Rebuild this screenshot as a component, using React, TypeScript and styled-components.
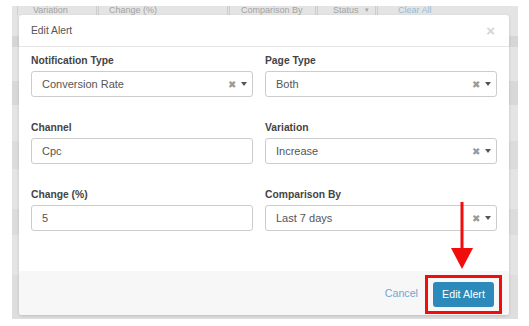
import React from "react";
import styled, { createGlobalStyle } from "styled-components";

const GlobalStyle = createGlobalStyle`
  html, body {
    margin: 0;
    padding: 0;
    background: #ffffff;
    font-family: "Liberation Sans", Arial, sans-serif;
  }
`;

const fields = [
  { label: "Notification Type", value: "Conversion Rate", select: true },
  { label: "Page Type", value: "Both", select: true },
  { label: "Channel", value: "Cpc", select: false },
  { label: "Variation", value: "Increase", select: true },
  { label: "Change (%)", value: "5", select: false },
  { label: "Comparison By", value: "Last 7 days", select: true },
];

const bgColumns = [
  { title: "Variation", width: 81, pad: 15 },
  { title: "Change (%)", width: 131, pad: 10 },
  { title: "Comparison By", width: 88, pad: 11 },
  { title: "Status", width: 60, pad: 15, caret: true },
];

const bgRows = [
  { h: 21, shade: "#e4e4e4" },
  { h: 11, shade: "#d6d6d6" },
  { h: 34, shade: "#e4e4e4" },
  { h: 24, shade: "#d8d8d8" },
  { h: 36, shade: "#e4e4e4" },
  { h: 28, shade: "#dcdcdc" },
  { h: 40, shade: "#e4e4e4" },
  { h: 26, shade: "#dcdcdc" },
  { h: 40, shade: "#e4e4e4" },
  { h: 60, shade: "#dedede" },
];

export default function App() {
  return (
    <>
      <GlobalStyle />
      <Page>
        <Backdrop>
          <BgHeader>
            <BgEdge />
            {bgColumns.map((col) => (
              <BgCell key={col.title} $width={col.width} $pad={col.pad}>
                {col.title}
                {col.caret && <BgCaret>▾</BgCaret>}
              </BgCell>
            ))}
            <BgLink>Clear All</BgLink>
          </BgHeader>
          {bgRows.map((row, i) => (
            <BgRow key={i} $h={row.h} $shade={row.shade} />
          ))}

          <Modal>
            <ModalHeader>
              <Title>Edit Alert</Title>
              <Close>×</Close>
            </ModalHeader>
            <ModalBody>
              {fields.map((f) => (
                <Field key={f.label}>
                  <Label>{f.label}</Label>
                  <Control>
                    <Value>{f.value}</Value>
                    {f.select && (
                      <Addons>
                        <ClearIcon>✖</ClearIcon>
                        <CaretIcon />
                      </Addons>
                    )}
                  </Control>
                </Field>
              ))}
            </ModalBody>
            <ModalFooter>
              <CancelLink>Cancel</CancelLink>
              <Highlight>
                <PrimaryButton>Edit Alert</PrimaryButton>
              </Highlight>
            </ModalFooter>
            <Arrow width="22" height="68" viewBox="0 0 22 68">
              <rect x="9.5" y="0" width="3" height="48" fill="#f20d0d" />
              <polygon points="0,46 22,46 11,67" fill="#f20d0d" />
            </Arrow>
          </Modal>
        </Backdrop>
      </Page>
    </>
  );
}

const Page = styled.div`
  width: 529px;
  height: 326px;
  padding: 6px 11px 7px 12px;
  box-sizing: border-box;
`;

const Backdrop = styled.div`
  position: relative;
  height: 313px;
  background: #e4e4e4;
  overflow: hidden;
`;

const BgHeader = styled.div`
  display: flex;
  align-items: center;
  height: 10px;
  margin-top: -1px;
  font-size: 9px;
  color: #a3a3a3;
  line-height: 10px;
`;

const BgEdge = styled.div`
  width: 5px;
  align-self: stretch;
  border-right: 1px solid #cfcfcf;
`;

const BgCell = styled.div<{ $width: number; $pad: number }>`
  display: flex;
  align-items: center;
  width: ${({ $width }) => $width}px;
  padding-left: ${({ $pad }) => $pad}px;
  box-sizing: border-box;
  align-self: stretch;
  border-right: 3px double #cccccc;
  white-space: nowrap;
`;

const BgCaret = styled.span`
  margin-left: auto;
  margin-right: 6px;
  font-size: 7px;
`;

const BgLink = styled.div`
  padding-left: 20px;
  color: #94bcd9;
`;

const BgRow = styled.div<{ $h: number; $shade: string }>`
  height: ${({ $h }) => $h}px;
  background: ${({ $shade }) => $shade};
`;

const Modal = styled.div`
  position: absolute;
  left: 7px;
  top: 9px;
  width: 490px;
  height: 300px;
  background: #ffffff;
  border-radius: 3px;
  box-shadow: 0 1px 3px rgba(0, 0, 0, 0.15);
  display: flex;
  flex-direction: column;
  overflow: visible;
`;

const ModalHeader = styled.div`
  height: 31px;
  padding: 0 14px 0 12px;
  border-bottom: 1px solid #e6e6e6;
  display: flex;
  align-items: center;
  justify-content: space-between;
`;

const Title = styled.span`
  font-size: 10.3px;
  color: #555555;
`;

const Close = styled.span`
  font-size: 15px;
  font-weight: bold;
  color: #d4d4d4;
`;

const ModalBody = styled.div`
  display: grid;
  grid-template-columns: 222px 1fr;
  column-gap: 12px;
  row-gap: 24px;
  padding: 7px 12px 0 12px;
`;

const Field = styled.div`
  display: flex;
  flex-direction: column;
`;

const Label = styled.label`
  font-size: 10.3px;
  line-height: 14px;
  font-weight: bold;
  color: #444444;
  margin-bottom: 3px;
`;

const Control = styled.div`
  height: 26px;
  box-sizing: border-box;
  border: 1px solid #cccccc;
  border-radius: 3px;
  display: flex;
  align-items: center;
  padding: 0 5px 0 10px;
`;

const Value = styled.span`
  font-size: 11px;
  color: #555555;
  flex: 1;
`;

const Addons = styled.div`
  display: flex;
  align-items: center;
  gap: 5px;
`;

const ClearIcon = styled.span`
  font-size: 9.5px;
  color: #9a9a9a;
`;

const CaretIcon = styled.span`
  width: 0;
  height: 0;
  border-left: 3.5px solid transparent;
  border-right: 3.5px solid transparent;
  border-top: 4px solid #555555;
`;

const ModalFooter = styled.div`
  margin-top: auto;
  height: 44px;
  background: #f7f7f7;
  border-radius: 0 0 3px 3px;
  display: flex;
  align-items: center;
  justify-content: flex-end;
  padding-right: 7px;
`;

const CancelLink = styled.span`
  font-size: 10.7px;
  color: #6fa6cf;
  margin-right: 7px;
`;

const Highlight = styled.div`
  border: 3px solid #f20d0d;
  padding: 4px 5px;
  margin-top: 2px;
`;

const PrimaryButton = styled.button`
  width: 61px;
  height: 25px;
  border: none;
  border-radius: 3px;
  background: #2b8ab9;
  color: #ffffff;
  font-family: "Liberation Sans", Arial, sans-serif;
  font-size: 10.7px;
  padding: 0;
`;

const Arrow = styled.svg`
  position: absolute;
  left: 432px;
  top: 187px;
`;
